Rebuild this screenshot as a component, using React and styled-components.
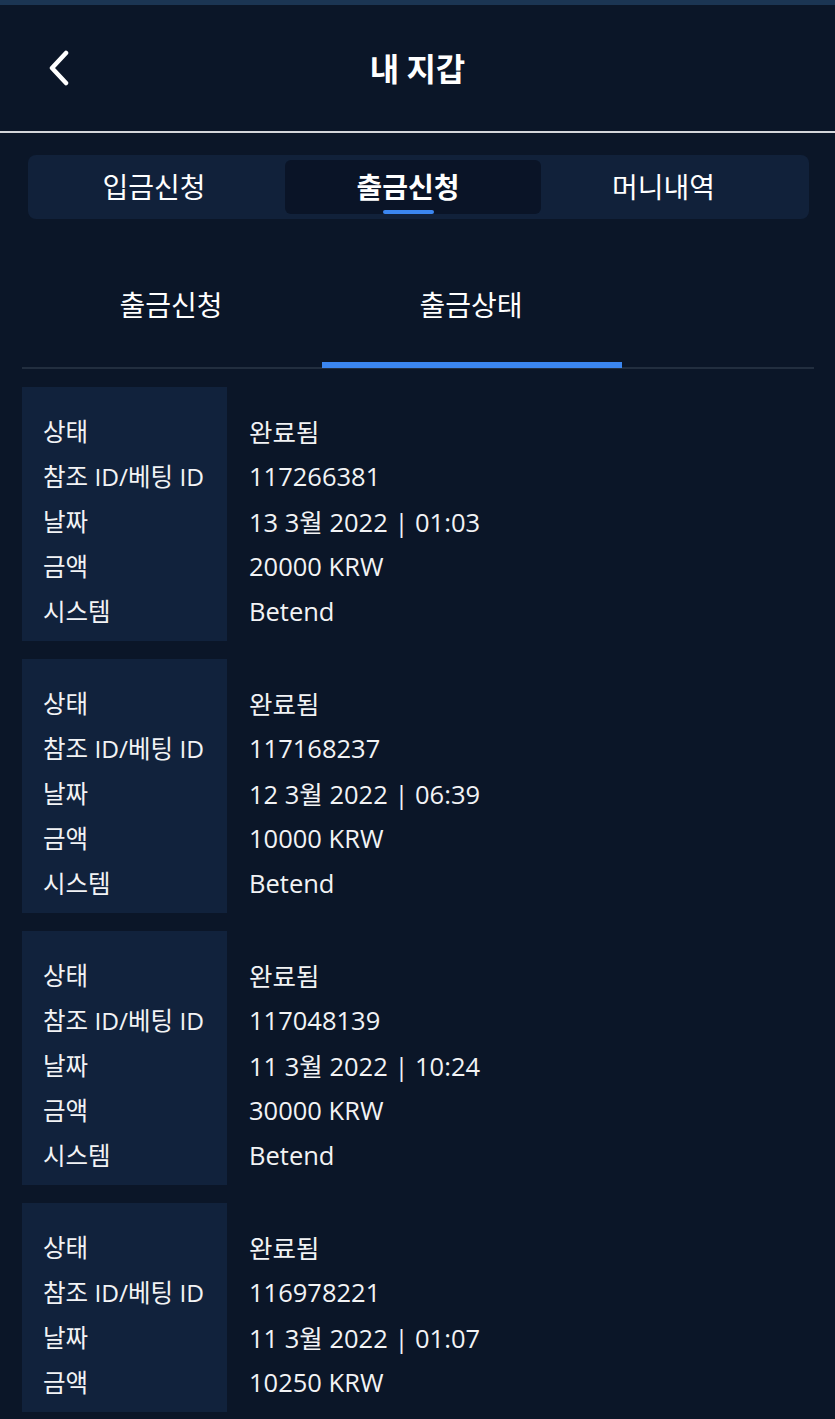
import React, { useState } from 'react';
import styled, { createGlobalStyle } from 'styled-components';

const GlobalStyle = createGlobalStyle`
  body {
    margin: 0;
    background: #0b1628;
    font-family: "Open Sans", "Noto Sans CJK KR", sans-serif;
    color: #ffffff;
  }
`;

const Page = styled.div`
  min-height: 1419px;
  background: #0b1628;
  border-top: 5px solid #1b3553;
`;

const Header = styled.header`
  position: relative;
  height: 126px;
  display: flex;
  align-items: center;
  justify-content: center;
  border-bottom: 2px solid #d4d6da;
`;

const BackButton = styled.button`
  position: absolute;
  left: 39px;
  top: 43px;
  width: 40px;
  height: 40px;
  padding: 0;
  border: none;
  background: transparent;
  cursor: pointer;
  display: flex;
  align-items: center;
  justify-content: center;
`;

const Title = styled.h1`
  margin: 0 0 2px;
  font-size: 32px;
  font-weight: 700;
  font-family: "Noto Sans CJK KR", sans-serif;
`;

const Segmented = styled.div`
  margin: 22px 26px 0 28px;
  padding: 5px;
  height: 54px;
  background: #11213a;
  border-radius: 8px;
  display: grid;
  grid-template-columns: 252px 256px 1fr;
`;

const SegTab = styled.button`
  position: relative;
  border: none;
  border-radius: 6px;
  background: ${(p) => (p.$active ? '#0a1427' : 'transparent')};
  color: #ffffff;
  font-family: "Noto Sans CJK KR", sans-serif;
  font-size: 28px;
  font-weight: ${(p) => (p.$active ? 700 : 400)};
  cursor: pointer;
  padding: 0 ${(p) => p.$padRight}px 2px 0;

  &::after {
    content: '';
    display: ${(p) => (p.$active ? 'block' : 'none')};
    position: absolute;
    left: 50%;
    bottom: 0;
    width: 51px;
    height: 4px;
    margin-left: -30px;
    border-radius: 2px;
    background: #3b86f0;
  }
`;

const SubTabs = styled.div`
  margin: 21px 21px 0 22px;
  display: flex;
  border-bottom: 2px solid #222e3f;
`;

const SubTab = styled.button`
  width: 300px;
  height: 128px;
  border: none;
  background: transparent;
  color: #ffffff;
  font-family: "Noto Sans CJK KR", sans-serif;
  font-size: 28px;
  padding: 6px 2px 0 0;
  margin-bottom: -1px;
  border-bottom: 6px solid ${(p) => (p.$active ? '#3b86f0' : 'transparent')};
  cursor: pointer;
`;

const List = styled.div`
  margin: 18px 21px 0 22px;
  display: flex;
  flex-direction: column;
  gap: 18px;
`;

const Card = styled.div`
  display: grid;
  grid-template-columns: 205px 1fr;
`;

const LabelCol = styled.div`
  background: #11223c;
  padding: 21px 0 8px 21px;
`;

const ValueCol = styled.div`
  padding: 21px 0 8px 22px;
`;

const Cell = styled.div`
  height: 45px;
  display: flex;
  align-items: center;
  font-size: ${(p) => (p.$value ? '25.5px' : '24.5px')};
  white-space: nowrap;
  color: #f2f3f5;
`;

const tabs = [
  { name: '입금신청', pad: 10 },
  { name: '출금신청', pad: 10 },
  { name: '머니내역', pad: 18 },
];

const labels = ['상태', '참조 ID/베팅 ID', '날짜', '금액', '시스템'];

const rows = [
  ['완료됨', '117266381', '13 3월 2022 | 01:03', '20000 KRW', 'Betend'],
  ['완료됨', '117168237', '12 3월 2022 | 06:39', '10000 KRW', 'Betend'],
  ['완료됨', '117048139', '11 3월 2022 | 10:24', '30000 KRW', 'Betend'],
  ['완료됨', '116978221', '11 3월 2022 | 01:07', '10250 KRW'],
];

const ChevronLeft = () => (
  <svg width="26" height="36" viewBox="0 0 26 36" fill="none">
    <path d="M20 3 L6 18 L20 33" stroke="#ffffff" strokeWidth="4.5" strokeLinecap="round" strokeLinejoin="round" />
  </svg>
);

const App = () => {
  const [tab, setTab] = useState(1);
  const [sub, setSub] = useState(1);

  return (
    <>
      <GlobalStyle />
      <Page>
        <Header>
          <BackButton aria-label="back">
            <ChevronLeft />
          </BackButton>
          <Title>내 지갑</Title>
        </Header>

        <Segmented>
          {tabs.map((t, i) => (
            <SegTab key={t.name} $active={tab === i} $padRight={t.pad} onClick={() => setTab(i)}>
              {t.name}
            </SegTab>
          ))}
        </Segmented>

        <SubTabs>
          {['출금신청', '출금상태'].map((t, i) => (
            <SubTab key={t} $active={sub === i} onClick={() => setSub(i)}>
              {t}
            </SubTab>
          ))}
        </SubTabs>

        <List>
          {rows.map((r) => (
            <Card key={r[1]}>
              <LabelCol>
                {labels.slice(0, r.length).map((l) => (
                  <Cell key={l}>{l}</Cell>
                ))}
              </LabelCol>
              <ValueCol>
                {r.map((v, i) => (
                  <Cell key={i} $value>{v}</Cell>
                ))}
              </ValueCol>
            </Card>
          ))}
        </List>
      </Page>
    </>
  );
};

export default App;
